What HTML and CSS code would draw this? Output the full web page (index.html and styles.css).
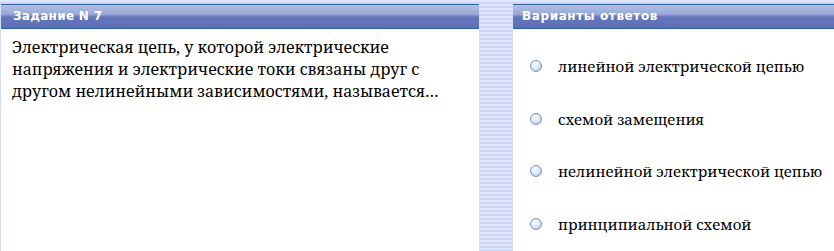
FILE: index.html
```html
<!DOCTYPE html>
<html lang="ru">
<head>
  <meta charset="UTF-8">
  <title>Задание N 7</title>
  <link rel="stylesheet" href="styles.css">
</head>
<body>

<div class="test">
  <div class="panel panel-question">
    <div class="panel-head">Задание N 7</div>
    <div class="panel-body question">
      Электрическая цепь, у которой электрические напряжения и электрические токи связаны друг с другом нелинейными зависимостями, называется…
    </div>
  </div>

  <div class="panel panel-answers">
    <div class="panel-head">Варианты ответов</div>
    <div class="panel-body">
      <ul class="answers">
        <li><span class="radio"></span>линейной электрической цепью</li>
        <li><span class="radio"></span>схемой замещения</li>
        <li><span class="radio"></span>нелинейной электрической цепью</li>
        <li><span class="radio"></span>принципиальной схемой</li>
      </ul>
    </div>
  </div>
</div>

</body>
</html>
```

FILE: styles.css
```css
html, body { margin: 0; padding: 0; height: 100%; overflow: hidden; }
body { background: repeating-linear-gradient(to bottom, #dfe5fa 0, #dfe5fa 2px, #cbd5f4 2px, #cbd5f4 4px); color: #111; }
.test { display: flex; gap: 34px; padding: 4px 0 0 1px; height: 100%; box-sizing: border-box; }
.panel { display: flex; flex-direction: column; background: #fff; }
.panel-question { width: 478px; flex: none; }
.panel-answers { flex: 1; min-width: 0; }
.panel-head { height: 23px; border-top: 1px solid #2f5e9c; border-bottom: 1px solid #2f5e9c; background: linear-gradient(to bottom, #b2bfe4 0, #9aa9d8 40%, #6476bb 52%, #5d6fb6 100%); color: #fff; font-family: "DejaVu Sans", Tahoma, sans-serif; font-size: 12px; font-weight: bold; line-height: 22px; padding-left: 12px; letter-spacing: 0.3px; }
.panel-answers .panel-head { padding-left: 9px; letter-spacing: 0.6px; }
.panel-body { flex: 1; min-height: 0; overflow: hidden; font-family: "Noto Serif", "DejaVu Serif", serif; font-size: 16px; color: #000; }
.question { padding: 7px 30px 0 11px; line-height: 22px; }
.answers { list-style: none; margin: 0; padding: 25px 0 0 17px; font-size: 15px; }
.answers li { display: flex; align-items: center; height: 24px; margin-bottom: 28.5px; white-space: nowrap; }
.answers li:last-child { margin-bottom: 0; }
.radio { width: 10px; height: 10px; border-radius: 50%; border: 1px solid #7b94c4; background: radial-gradient(circle at 40% 35%, #fff 0, #e6ecf8 40%, #a9bde0 100%); margin-right: 16px; flex: none; }
```
